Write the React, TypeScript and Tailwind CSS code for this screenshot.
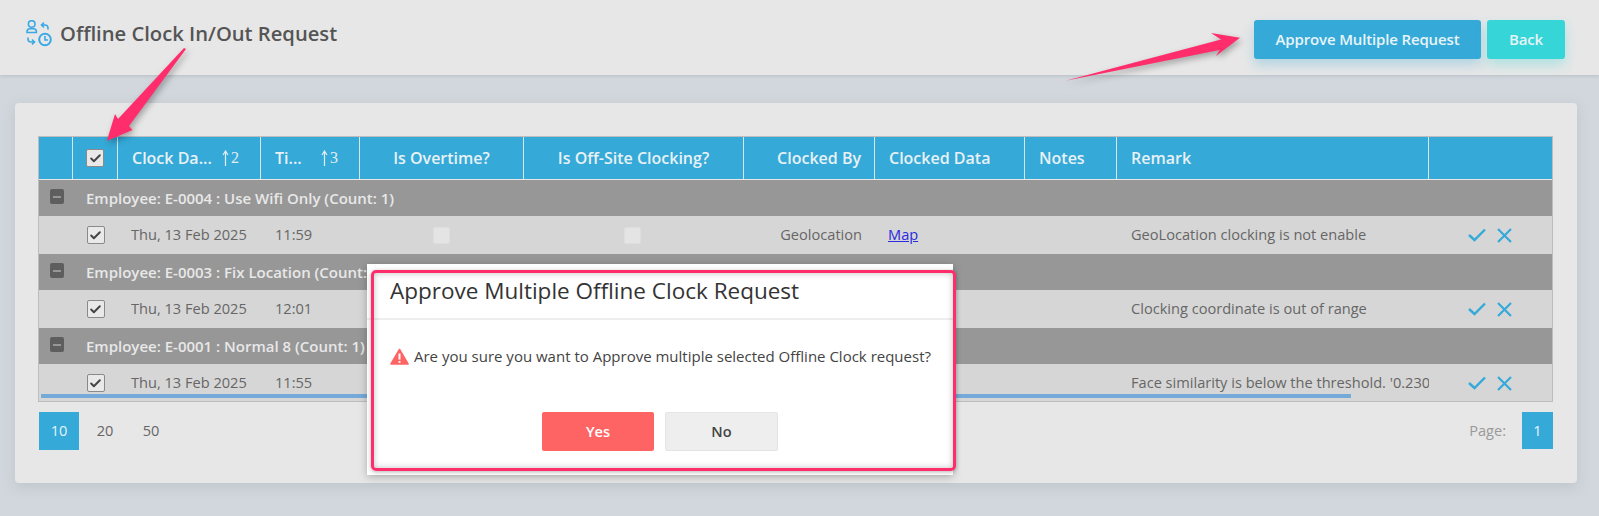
import { Check } from 'lucide-react';

const font = { fontFamily: '"Open Sans", "Noto Sans", sans-serif' };

function TitleIcon() {
  return (
    <svg width="28" height="28" viewBox="25 20 28 28" fill="none" stroke="#3aa9e6" strokeWidth="1.6" className="shrink-0">
      <circle cx="31.7" cy="24" r="3.3" />
      <path d="M27 32.5v-1.2a3 3 0 0 1 3-2.6h3.4a3 3 0 0 1 3 2.6v1.2z" />
      <path d="M48 29.5v-1.5a3 3 0 0 0-3-3h-3.2M44 22.5l-2.5 2.5 2.5 2.5" />
      <path d="M28 37.5v1.5a3 3 0 0 0 3 3h3.2M32 39.5l2.5 2.5-2.5 2.5" />
      <circle cx="45" cy="39.5" r="5.8" strokeWidth="2" />
      <path d="M45 36v4h3" />
    </svg>
  );
}

function Box({ checked = false }: { checked?: boolean }) {
  if (!checked) {
    return <span className="mx-auto block h-[17px] w-[17px] rounded-[2px] border border-[#dedede] bg-[#e4e4e4]" />;
  }
  return (
    <span className="mx-auto flex h-[18px] w-[18px] items-center justify-center rounded-[2px] border border-[#8a8a8a] bg-[#e9e9e9]">
      <Check size={13} strokeWidth={3.6} color="#444" />
    </span>
  );
}

function Sort({ n }: { n: number }) {
  return (
    <span className="flex shrink-0 items-center text-[#e4eef3]">
      <svg width="7" height="16" viewBox="0 0 7 16" fill="none" stroke="currentColor" strokeWidth="1.2">
        <path d="M3.5 16V1.5M1 5 3.5 1 6 5" />
      </svg>
      <span className="ml-[2px] text-[16px] font-normal" style={{ fontFamily: '"Liberation Serif", serif' }}>{n}</span>
    </span>
  );
}

function GroupRow({ label }: { label: string }) {
  return (
    <tr className="h-[36px] bg-[#979797]">
      <td colSpan={11} className="p-0">
        <div className="flex items-center">
          <span className="mb-[3px] ml-[11px] flex h-[15px] w-[14px] items-center justify-center rounded-[2px] bg-[#5e5e5e]">
            <span className="h-[2px] w-[8px] bg-[#979797]" />
          </span>
          <span className="ml-[22px] whitespace-nowrap text-[15px] font-semibold text-[#e8e8e8]">{label}</span>
        </div>
      </td>
    </tr>
  );
}

function DataRow({ time, remark, details = true }: { time: string; remark: string; details?: boolean }) {
  return (
    <tr className="h-[38px] bg-[#d6d6d6] text-[14.6px] text-[#666]">
      <td className="p-0" />
      <td className="p-0"><Box checked /></td>
      <td className="overflow-hidden whitespace-nowrap p-0 pl-[13px]">Thu, 13 Feb 2025</td>
      <td className="p-0 pl-[14px]">{time}</td>
      <td className="p-0 pr-[2px]">{details && <Box />}</td>
      <td className="p-0 pr-[3px]">{details && <Box />}</td>
      <td className="p-0 pr-[13px] text-right">{details && 'Geolocation'}</td>
      <td className="p-0 pl-[13px]">
        {details && <a href="#map" className="text-[#2a2ae0] underline">Map</a>}
      </td>
      <td className="p-0" />
      <td className="overflow-hidden whitespace-nowrap p-0 pl-[14px]">{remark}</td>
      <td className="p-0">
        <div className="flex items-center pl-[39px] text-[#35a9d8]">
          <svg width="18" height="14" viewBox="0 0 18 14" fill="none" stroke="currentColor" strokeWidth="2.4">
            <path d="M1 7l5.5 5L17 1.5" />
          </svg>
          <svg width="15" height="15" viewBox="0 0 15 15" fill="none" stroke="currentColor" strokeWidth="2.2" className="ml-[11px]">
            <path d="M1 1l13 13M14 1 1 14" />
          </svg>
        </div>
      </td>
    </tr>
  );
}

export default function App() {
  return (
    <div className="relative h-[516px] w-[1599px] overflow-hidden bg-[#d1d7dc]" style={font}>
      <div className="flex h-[75px] items-start justify-between bg-[#e7e7e7] pl-[25px] pr-[34px] shadow-[0_1px_3px_rgba(120,130,140,0.25)]">
        <div className="mt-[20px] flex items-center">
          <TitleIcon />
          <h1 className="ml-[7px] -mt-[2px] text-[20.2px] font-semibold text-[#555]">Offline Clock In/Out Request</h1>
        </div>
        <div className="mt-[20px] flex gap-[6px]">
          <button className="h-[39px] w-[227px] rounded-[3px] bg-[#35a9d8] text-[15px] font-semibold tracking-[-0.15px] text-[#e8f4f8] shadow-[0_6px_12px_rgba(53,169,216,0.3)]">
            Approve Multiple Request
          </button>
          <button className="h-[39px] w-[78px] rounded-[3px] bg-[#35d5d8] text-[15px] font-semibold tracking-[-0.15px] text-[#e8f4f8] shadow-[0_6px_12px_rgba(53,213,216,0.3)]">
            Back
          </button>
        </div>
      </div>

      <div className="ml-[15px] mt-[28px] h-[380px] w-[1562px] rounded-[4px] bg-[#e7e7e7] px-[23px] pt-[33px] shadow-[0_4px_14px_rgba(120,130,140,0.2)]">
        <div className="relative h-[266px] w-[1515px] overflow-hidden border border-[#bdbdbd]">
          <table className="w-[1513px] table-fixed border-separate border-spacing-0">
            <colgroup>
              <col className="w-[34px]" />
              <col className="w-[45px]" />
              <col className="w-[143px]" />
              <col className="w-[99px]" />
              <col className="w-[164px]" />
              <col className="w-[220px]" />
              <col className="w-[131px]" />
              <col className="w-[150px]" />
              <col className="w-[92px]" />
              <col className="w-[312px]" />
              <col className="w-[123px]" />
            </colgroup>
            <thead>
              <tr className="h-[42px] bg-[#35a9d8] text-[16px] font-semibold text-[#e8f1f5]">
                <th className="border-r border-[#d8e6ec] p-0" />
                <th className="border-r border-[#d8e6ec] p-0"><Box checked /></th>
                <th className="border-r border-[#d8e6ec] p-0 pl-[14px] font-semibold">
                  <div className="flex items-center"><span className="w-[90px] whitespace-nowrap text-left">Clock Da...</span><Sort n={2} /></div>
                </th>
                <th className="border-r border-[#d8e6ec] p-0 pl-[14px] font-semibold">
                  <div className="flex items-center"><span className="w-[46px] whitespace-nowrap text-left">Ti...</span><Sort n={3} /></div>
                </th>
                <th className="border-r border-[#d8e6ec] p-0 font-semibold">Is Overtime?</th>
                <th className="border-r border-[#d8e6ec] p-0 font-semibold">Is Off-Site Clocking?</th>
                <th className="border-r border-[#d8e6ec] p-0 pr-[13px] text-right font-semibold">Clocked By</th>
                <th className="border-r border-[#d8e6ec] p-0 pl-[14px] text-left font-semibold">Clocked Data</th>
                <th className="border-r border-[#d8e6ec] p-0 pl-[14px] text-left font-semibold">Notes</th>
                <th className="border-r border-[#d8e6ec] p-0 pl-[14px] text-left font-semibold">Remark</th>
                <th className="p-0" />
              </tr>
              <tr className="h-[1px] bg-[#e7e7e7]"><th colSpan={11} className="p-0" /></tr>
            </thead>
            <tbody>
              <GroupRow label="Employee: E-0004 : Use Wifi Only (Count: 1)" />
              <DataRow time="11:59" remark="GeoLocation clocking is not enable" />
              <GroupRow label="Employee: E-0003 : Fix Location (Count: 1)" />
              <DataRow time="12:01" remark="Clocking coordinate is out of range" details={false} />
              <GroupRow label="Employee: E-0001 : Normal 8 (Count: 1)" />
              <DataRow time="11:55" remark="Face similarity is below the threshold. '0.2301' required '0.5'" details={false} />
            </tbody>
          </table>
          <div className="absolute bottom-[3px] left-[2px] h-[4px] w-[1310px] bg-[#74a9d8]" />
        </div>

        <div className="mt-[10px] flex w-[1515px] items-start pl-px text-[14.6px] text-[#666]">
          <span className="flex h-[38px] w-[40px] items-center justify-center bg-[#35a9d8] text-[#e8f4f8]">10</span>
          <span className="flex h-[38px] w-[52px] items-center justify-center">20</span>
          <span className="flex h-[38px] w-[40px] items-center justify-center">50</span>
          <span className="ml-auto mr-[16px] mt-[8px] text-[#999]">Page:</span>
          <span className="flex h-[37px] w-[31px] items-center justify-center bg-[#35a9d8] text-[#e8f4f8]">1</span>
        </div>
      </div>

      {/* confirm dialog */}
      <div className="absolute left-[367px] top-[264px] h-[211px] w-[586px] bg-white shadow-[0_2px_8px_rgba(0,0,0,0.25)]">
        <div className="flex h-[56px] items-center border-b-2 border-[#eee] pl-[23px] text-[22.5px] text-[#333]">
          Approve Multiple Offline Clock Request
        </div>
        <div className="mt-[25px] flex h-[22px] items-center pl-[23px] text-[15px] text-[#444]">
          <svg width="19" height="17" viewBox="0 0 19 17" className="mr-[5px] shrink-0">
            <path d="M9.5 1.5 18 16H1z" fill="#ff6464" stroke="#ff6464" strokeWidth="1.6" strokeLinejoin="round" />
            <path d="M9.5 5.5v6M9.5 13v1.8" stroke="#fff" strokeWidth="2" />
          </svg>
          Are you sure you want to Approve multiple selected Offline Clock request?
        </div>
        <div className="mt-[45px] flex pl-[175px]">
          <button className="h-[39px] w-[112px] rounded-[2px] bg-[#ff6464] text-[14.6px] font-semibold text-white">Yes</button>
          <button className="ml-[11px] h-[39px] w-[113px] rounded-[2px] border border-[#e4e4e4] bg-[#eee] text-[14.6px] font-semibold text-[#444]">No</button>
        </div>
      </div>

      {/* annotations */}
      <div className="absolute left-[371px] top-[270px] h-[201px] w-[585px] rounded-[5px] border-[3px] border-[#ff2d6b] shadow-[0_1px_4px_rgba(0,0,0,0.3),inset_0_0_6px_rgba(0,0,0,0.25)]" />
      <svg className="pointer-events-none absolute left-0 top-0 drop-shadow-[2px_3px_3px_rgba(0,0,0,0.3)]" width="1599" height="516" fill="#ff2d6b">
        <polygon points="186,49 184,48 118,119 115,114 106.8,141 132.5,130 129,126" />
        <polygon points="1065.7,80.7 1221,39.5 1211,33 1240,37.7 1216,56 1219.6,50" />
      </svg>
    </div>
  );
}
